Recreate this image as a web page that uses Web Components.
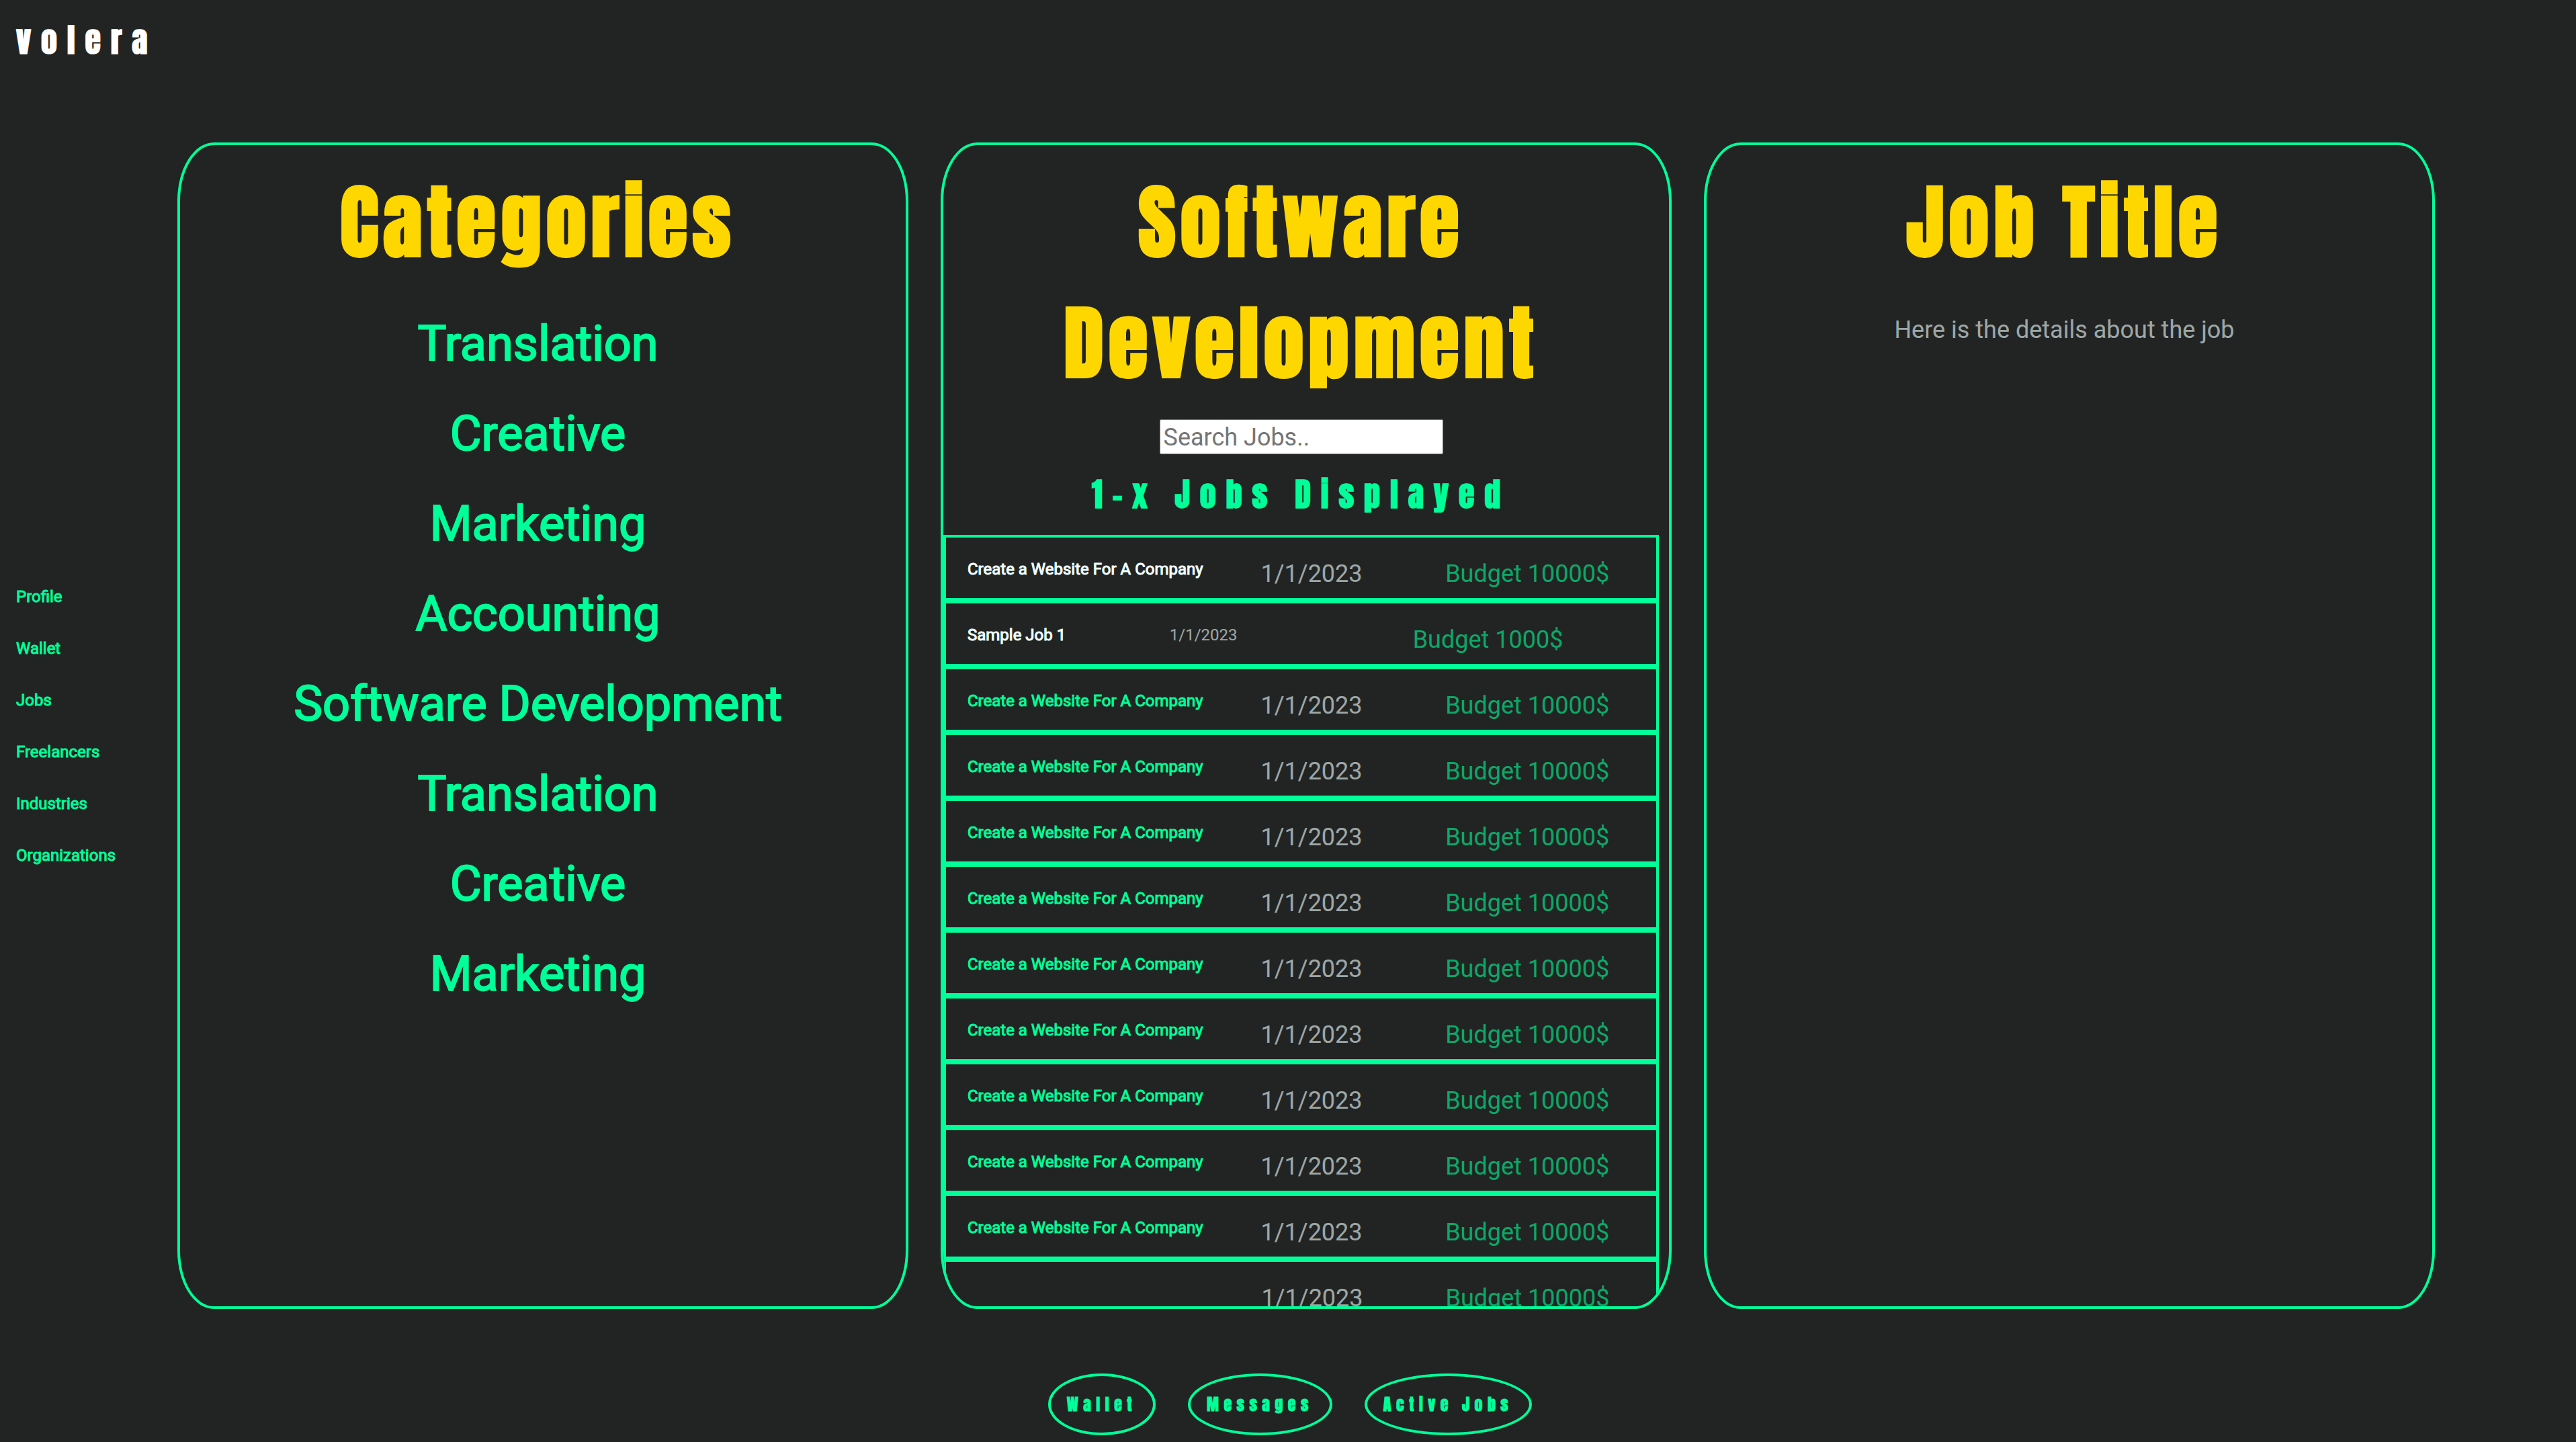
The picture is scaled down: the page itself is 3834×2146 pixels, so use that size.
<!DOCTYPE html>
<html lang="en">
<head>
<meta charset="utf-8">
<title>volera</title>
<style>
  :root {
    --bg: #222423;
    --mint: #00ff99;
    --gold: #ffd700;
    --azure: #f0ffff;
    --display: Anton, Impact, sans-serif;
    --body: Roboto, "Liberation Sans", sans-serif;
  }
  body { margin: 0; background: var(--bg); color: var(--azure); font: 36px/42px var(--body); }
</style>
</head>
<body>
<volera-app></volera-app>

<script>
const define = (name, html, setup) => {
  const template = document.createElement('template');
  template.innerHTML = html;
  customElements.define(name, class extends HTMLElement {
    constructor() {
      super();
      this.attachShadow({ mode: 'open' }).append(template.content.cloneNode(true));
    }
    connectedCallback() {
      if (setup) setup.call(this, this.shadowRoot);
    }
  });
};

define('volera-logo', `
  <style>
    :host { display: block; padding: 24px 24px 0; }
    h3 { margin: 0; font: 700 48px/72px var(--display); letter-spacing: 0.31em; color: #fff; }
  </style>
  <h3><slot></slot></h3>
`);

define('side-nav', `
  <style>
    :host { display: flex; flex-direction: column; justify-content: center; gap: 49px; }
  </style>
  <slot></slot>
`);

define('text-link', `
  <style>
    :host { display: block; }
    a { display: block; color: var(--link, var(--mint)); text-decoration: none;
        font: 400 24px/28px var(--body); -webkit-text-stroke: 1px var(--link, var(--mint)); }
    :host([large]) a { font-size: 72px; line-height: 84px; -webkit-text-stroke-width: 2px; }
  </style>
  <a href="#"><slot></slot></a>
`);

define('panel-card', `
  <style>
    :host { display: block; box-sizing: border-box; min-width: 0; overflow: hidden;
            border: 4px solid var(--mint); border-radius: 5%;
            padding: 24px 15px 0 0; text-align: center; }
    h1 { margin: 0; font: 700 120px/180px var(--display); letter-spacing: 0.06em; color: var(--gold); }
  </style>
  <h1><slot name="title"></slot></h1>
  <slot></slot>
`);

define('category-list', `
  <style>
    :host { display: flex; flex-direction: column; gap: 50px; padding-top: 50px; }
  </style>
  <slot></slot>
`);

define('job-search', `
  <style>
    :host { display: flex; flex-direction: column; align-items: center; padding: 24px 0; }
    input { box-sizing: border-box; width: 422px; height: 52px; margin: 0 0 24px; padding: 4px 5px 2px;
            border: 1px solid #767676; border-radius: 2px; background: #fff; color: #000;
            font: 36px/42px var(--body); }
    input::placeholder { color: #757575; }
    h3 { margin: 0; font: 700 48px/72px var(--display); letter-spacing: 0.31em; color: var(--mint); }
  </style>
  <input type="text" placeholder="Search Jobs.." aria-label="Search jobs">
  <h3><slot></slot></h3>
`);

define('job-row', `
  <style>
    :host { display: flex; align-items: center; box-sizing: border-box; height: 98px;
            border: 4px solid var(--mint); padding: 4px 8px 0 32px; text-align: left; }
    text-link { margin-right: 24px; }
    :host([selected]) { --link: var(--azure); }
    :host([untitled]) text-link { min-width: 352px; }
    span { margin: 0 auto; padding-top: 14px; opacity: .6; }
    .budget { color: var(--mint); }
    :host([compact]) .date { padding-top: 0; font-size: 24px; line-height: 28px; }
  </style>
  <text-link><slot></slot></text-link>
  <span class="date"></span>
  <span class="budget"></span>
`, function (root) {
  root.querySelector('.date').textContent = this.getAttribute('date');
  root.querySelector('.budget').textContent = 'Budget ' + this.getAttribute('budget') + '$';
});

define('job-detail', `
  <style>
    :host { display: block; padding-top: 50px; }
    p { margin: 0; opacity: .6; }
  </style>
  <p><slot></slot></p>
`);

define('pill-button', `
  <style>
    :host { display: block; }
    button { display: block; margin: 0; padding: 24px; border: 4px solid var(--mint); border-radius: 50%;
             background: transparent; color: var(--mint);
             font: 700 24px/36px var(--display); letter-spacing: 0.31em; }
  </style>
  <button type="button"><slot></slot></button>
`);

define('volera-app', `
  <style>
    :host { display: flex; flex-direction: column; box-sizing: border-box; height: 100vh; }
    main { flex: 1; min-height: 0; display: grid; grid-template-columns: 240px minmax(0, 1fr);
           padding: 116px 210px 96px 24px; }
    section { min-height: 0; display: grid; grid-template-columns: repeat(3, minmax(0, 1fr));
              grid-template-rows: minmax(0, 1fr); gap: 48px; }
    footer { display: flex; justify-content: center; gap: 48px; padding: 0 0 10px 6px; }
  </style>
  <volera-logo>volera</volera-logo>
  <main>
    <side-nav>
      <text-link>Profile</text-link>
      <text-link>Wallet</text-link>
      <text-link>Jobs</text-link>
      <text-link>Freelancers</text-link>
      <text-link>Industries</text-link>
      <text-link>Organizations</text-link>
    </side-nav>
    <section>
      <panel-card>
        <span slot="title">Categories</span>
        <category-list>
          <text-link large>Translation</text-link>
          <text-link large>Creative</text-link>
          <text-link large>Marketing</text-link>
          <text-link large>Accounting</text-link>
          <text-link large>Software Development</text-link>
          <text-link large>Translation</text-link>
          <text-link large>Creative</text-link>
          <text-link large>Marketing</text-link>
        </category-list>
      </panel-card>
      <panel-card>
        <span slot="title">Software Development</span>
        <job-search>1-x Jobs Displayed</job-search>
        <job-row selected date="1/1/2023" budget="10000">Create a Website For A Company</job-row>
        <job-row selected compact date="1/1/2023" budget="1000">Sample Job 1</job-row>
        <job-row date="1/1/2023" budget="10000">Create a Website For A Company</job-row>
        <job-row date="1/1/2023" budget="10000">Create a Website For A Company</job-row>
        <job-row date="1/1/2023" budget="10000">Create a Website For A Company</job-row>
        <job-row date="1/1/2023" budget="10000">Create a Website For A Company</job-row>
        <job-row date="1/1/2023" budget="10000">Create a Website For A Company</job-row>
        <job-row date="1/1/2023" budget="10000">Create a Website For A Company</job-row>
        <job-row date="1/1/2023" budget="10000">Create a Website For A Company</job-row>
        <job-row date="1/1/2023" budget="10000">Create a Website For A Company</job-row>
        <job-row date="1/1/2023" budget="10000">Create a Website For A Company</job-row>
        <job-row untitled date="1/1/2023" budget="10000"></job-row>
      </panel-card>
      <panel-card>
        <span slot="title">Job Title</span>
        <job-detail>Here is the details about the job</job-detail>
      </panel-card>
    </section>
  </main>
  <footer>
    <pill-button>Wallet</pill-button>
    <pill-button>Messages</pill-button>
    <pill-button>Active Jobs</pill-button>
  </footer>
`);
</script>
</body>
</html>
